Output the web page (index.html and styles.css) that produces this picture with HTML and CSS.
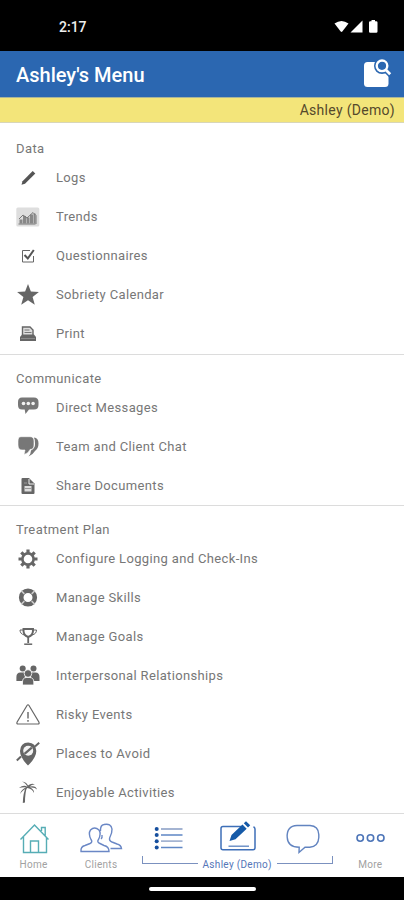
FILE: index.html
```
<!DOCTYPE html>
<html lang="en">
<head>
<meta charset="utf-8">
<title>Ashley's Menu</title>
<link rel="stylesheet" href="styles.css">
</head>
<body>
<div class="status">
  <span class="time">2:17</span>
  <svg class="status-icons" width="46" height="16" viewBox="0 0 46 16" fill="#fff"><path d="M.5 4.5Q7.500-.5 14.500 4.500L8.300 12.500Q7.500 13.300 6.700 12.500Z"/><path d="M28.500 1.500V13.500H16.500Z"/><path d="M37.500 2.200V1h3.500v1.200h1.200q1.300 0 1.300 1.300v9q0 1.300-1.300 1.300h-5.900q-1.300 0-1.300-1.300v-9q0-1.300 1.300-1.300Z"/></svg>
</div>
<header class="header">
  <h1>Ashley's Menu</h1>
  <svg class="search" width="30" height="30" viewBox="0 0 30 30"><rect x="2" y="4" width="24.500" height="25" rx="3.500" fill="#fff"/><circle cx="20" cy="8" r="8" fill="#2b67b1"/><path d="M23 11l6 6" stroke="#2b67b1" stroke-width="6"/><circle cx="20" cy="7.800" r="5.300" fill="none" stroke="#fff" stroke-width="2.400"/><path d="M23.500 11.500l4.700 4.700" stroke="#fff" stroke-width="2.800"/></svg>
</header>
<div class="client">Ashley (Demo)</div>
<main class="menu">
  <section class="data">
    <h2>Data</h2>
    <div class="row"><svg viewBox="0 0 24 24"><path d="M5.500 18.800l1-3.600L16.700 5l2.600 2.500L9 17.700Z" fill="#555"/></svg><span class="w-logs">Logs</span></div>
    <div class="row"><svg viewBox="0 0 24 24"><rect x=".3" y="2.500" width="23" height="19" rx="1.500" fill="#dedede"/><path d="M3.500 14.500h3v4h-3zM7 11h3v7.500H7zM10.500 12.500h3v6h-3zM14 9.500h3v9h-3zM17.500 8.500h2v10h-2z" fill="#888"/><path d="M2.500 19h17M3 14l4-4 4 3 6-5.500 3 3V19" fill="none" stroke="#777"/></svg><span>Trends</span></div>
    <div class="row"><svg viewBox="0 0 24 24" fill="none" stroke="#666"><path d="M14 6.500H6.500V18h11v-6"/><path d="M8.500 11l3.300 3.500L17.800 6" stroke="#555" stroke-width="2"/></svg><span>Questionnaires</span></div>
    <div class="row"><svg viewBox="0 0 24 24"><path d="M12 1l2.900 7.500 8 .4-6.300 5 2.200 7.800L12 17.200l-6.800 4.500 2.200-7.800-6.300-5 8-.4Z" fill="#666"/></svg><span>Sobriety Calendar</span></div>
    <div class="row"><svg viewBox="0 0 24 24"><path d="M6.500 13V5H14l3 3v5" fill="#ddd" stroke="#666" stroke-width="1.400"/><path d="M8.500 8h5M8.500 10.500h7" stroke="#777"/><path d="M6 12.500h12l2 2.500v4H4v-4Z" fill="#666"/><path d="M5 16.500h14" stroke="#999" stroke-width=".7"/></svg><span>Print</span></div>
  </section>
  <section>
    <h2>Communicate</h2>
    <div class="row"><svg viewBox="0 0 24 24"><path d="M6 1.500h12q4.500 0 4.500 4.500v3q0 4.500-4.500 4.500h-5L9.500 18l-.8-4.500H6Q2 13.500 2 9V6q0-4.500 4-4.500Z" fill="#777"/><g fill="#f2f2f2"><circle cx="7.500" cy="7.500" r="1.800"/><circle cx="12.300" cy="7.500" r="1.800"/><circle cx="17.100" cy="7.500" r="1.800"/></g></svg><span>Direct Messages</span></div>
    <div class="row"><svg viewBox="0 0 24 24"><path d="M18 2.500q4.500.5 4.500 6 0 5-3.500 7.500-2 3.500-6.500 5.500 2.500-3 2.500-6 4-2 4-6.500Q19 5 18 2.500Z" fill="#777"/><path d="M5 1.700h9q4 0 4 4.300v4q0 4.500-4 4.500-1.500 4-6 5l1-4.500H6q-4 0-4-5V6q0-4.300 3-4.300Z" fill="#777" stroke="#fff" stroke-width=".6"/></svg><span>Team and Client Chat</span></div>
    <div class="row"><svg viewBox="0 0 24 24"><path d="M6.500 4H13l5.500 5.500V19q0 1-1 1h-11Q5.500 20 5.500 19V5q0-1 1-1Z" fill="#666"/><path d="M13 5v5h5" fill="none" stroke="#eee"/><path d="M8.500 12h7v5.500h-7Z" fill="#ddd"/><path d="M8.500 14.500h7M8 9h3" stroke="#999"/></svg><span>Share Documents</span></div>
  </section>
  <section class="plan">
    <h2>Treatment Plan</h2>
    <div class="row"><svg viewBox="0 0 24 24"><g stroke="#666" stroke-width="3.200"><path d="M12 2.500v19M2.500 12h19M5.300 5.300l13.400 13.400M5.300 18.700L18.700 5.300"/></g><circle cx="12" cy="12" r="5.600" fill="#fff" stroke="#666" stroke-width="2.600"/></svg><span>Configure Logging and Check-Ins</span></div>
    <div class="row"><svg viewBox="0 0 24 24" fill="none"><circle cx="12" cy="11.500" r="6.800" stroke="#666" stroke-width="4.600"/><path d="M5.200 4.700l3.200 3.200M18.800 4.700l-3.200 3.200M5.200 18.300l3.200-3.200M18.800 18.300l-3.200-3.200" stroke="#ccc" stroke-width="1.500"/></svg><span>Manage Skills</span></div>
    <div class="row"><svg viewBox="0 0 24 24" fill="none" stroke="#666"><path d="M7.500 4h9.500q.5 6.500-4.800 8Q7 10.500 7.500 4Z" stroke-width="2"/><path d="M7.500 5H4q0 4 4.500 5M17 5h3.500q0 4-4.500 5"/><path d="M12.200 12v6" stroke-width="1.800"/><path d="M8.200 19.200h8" stroke-width="1.500"/></svg><span>Manage Goals</span></div>
    <div class="row"><svg viewBox="0 0 24 24" fill="#666"><circle cx="6.700" cy="4.500" r="3"/><circle cx="17.500" cy="4.500" r="3"/><path d="M.4 17V13q0-4.500 4-4.500h4.500V17ZM15 8.500h4.500q4 0 4 4.500v4H15Z"/><g stroke="#fff" stroke-width=".8"><path d="M6.500 21v-3q0-4.500 4-4.500h3q4.300 0 4.300 4.500v3Z"/><circle cx="12" cy="9.500" r="3.800"/></g></svg><span>Interpersonal Relationships</span></div>
    <div class="row"><svg viewBox="0 0 24 24" fill="none" stroke="#666"><path d="M11 2.500q1-1.500 2 0l10 16.800q.5 1.700-1 1.700H2q-1.500 0-1-1.700Z" stroke-width="1.200"/><path d="M12 9v6.500M12 17v1.800" stroke-width="1.400"/></svg><span>Risky Events</span></div>
    <div class="row"><svg viewBox="0 0 24 24"><path d="M.8 18.500L5 14.500M19 4.500l4.200-3.700" stroke="#666" stroke-width="2"/><path d="M12 23.500Q4 15.500 4 9 4.500.7 12.200.6 20 1 20.300 9q0 6.500-8.300 14.500Z" fill="#666"/><circle cx="12.200" cy="8.700" r="5" fill="#f3f3f3"/><path d="M8.500 11.800l7.300-6.100" stroke="#666" stroke-width="2.200"/></svg><span>Places to Avoid</span></div>
    <div class="row"><svg viewBox="0 0 24 24" fill="#666"><path d="M11.200 6Q9 11 9 21.500L6.800 22Q7 12 10 6Z"/><path d="M11.500 6Q8 3 3 7q4-1 8-.5Q6 7 4 13q3-4.500 7.500-6 5 1 6.500 5 .5-3.500-4-5.500 5-.5 7 2-1-4.500-7.500-3 3-2.500 5.500-2-3.500-2-7 1Q10.500 1 6 .5q4 1.500 5.500 5.500Z"/></svg><span>Enjoyable Activities</span></div>
  </section>
</main>
<nav class="nav">
  <div class="tab"><svg width="36" height="34" viewBox="0 0 36 34" fill="none" stroke="#56adb5" stroke-width="1.400"><path d="M4.500 18.500L18.500 4l14 14.500M7.500 16v15.500h23V16M25.500 10V6.500h3.700v8M14.500 31.500V20h8v11.500"/></svg></div>
  <div class="tab"><svg width="44" height="34" viewBox="0 0 44 34" fill="none" stroke="#6a87c5" stroke-width="1.400"><path d="M2 30.500q-.5-5 4-6l5-2q3-1.500 1-4-3-6-.5-9.500 4-4 8.500 0 2.500 3.500-.5 9.500-2 2.500 1.500 4l4 2q5 1 5 6Z"/><path d="M21.500 10q-.3-6 3.500-6.500 7-1.500 8 4.500.2 4-2.200 8.500-1.200 3 2.200 4.500l5 2q4 1 4.500 4.500h-11M22 18q1.500-1 1-4"/></svg></div>
  <div class="tab"><svg width="32" height="34" viewBox="0 0 32 34"><path d="M9 8h21.500M9 20.200h21.500" stroke="#a4b4d2" stroke-width="1.800"/><path d="M9 14h21.500M9 26.500h21.500" stroke="#5f87c5" stroke-width="1.500"/><g fill="#164f9e"><circle cx="4.700" cy="8" r="2"/><circle cx="4.700" cy="14" r="2"/><circle cx="4.700" cy="20.200" r="2"/><circle cx="4.700" cy="26.500" r="2"/></g></svg></div>
  <div class="tab"><svg class="edit" width="40" height="34" viewBox="0 0 40 34"><path d="M24 5.500H5q-2 0-2 2V27q0 1.700 2 1.700h30q2 0 2-1.700V8q0-1.500-1.500-2.200" fill="none" stroke="#3e6fb8" stroke-width="1.500"/><path d="M10.500 25.200h20.500" stroke="#5b83c0" stroke-width="1.300"/><path d="M11.500 20l2-6L24.500 3.500l4.200 4.200L17.500 18.200ZM25.800 2.300L28 .2l4.200 4-2.200 2.300Z" fill="#155aa8"/></svg></div>
  <div class="tab"><svg width="36" height="34" viewBox="0 0 36 34" fill="none" stroke="#6284c0" stroke-width="1.400"><path d="M12 4.500h13q8.500.5 8.800 9v3q-.5 9-9 9.800H20L14 31.500l.2-5.200q-11.500 0-12-10Q1.500 5 12 4.500Z"/></svg></div>
  <div class="tab"><svg width="36" height="34" viewBox="0 0 36 34" fill="none" stroke="#4d75b8" stroke-width="1.600"><circle cx="8.200" cy="17" r="3.200"/><circle cx="18.500" cy="17" r="3.200"/><circle cx="28.800" cy="17" r="3.200"/></svg></div>
  <span class="label">Home</span>
  <span class="label">Clients</span>
  <div class="group"><i class="left"></i><span>Ashley (Demo)</span><i class="right"></i></div>
  <span class="label more">More</span>
</nav>
<footer class="gesture"><i></i></footer>
</body>
</html>
```
FILE: styles.css
```
* { box-sizing: border-box; }
body {
  margin: 0;
  width: 404px;
  height: 900px;
  display: flex;
  flex-direction: column;
  overflow: hidden;
  background: #fff;
  font-family: Roboto, "Liberation Sans", sans-serif;
}
.status {
  height: 51px;
  flex: none;
  display: flex;
  align-items: center;
  justify-content: space-between;
  padding: 2px 24px 0 59px;
  background: #000;
  color: #eee;
}
.time { font-size: 14px; font-weight: 500; line-height: 16px; }
.header {
  height: 46px;
  flex: none;
  display: flex;
  align-items: center;
  justify-content: space-between;
  padding: 2px 12px 0 16px;
  background: #2b67b1;
  color: #fff;
}
h1 { margin: 0; font-size: 20px; font-weight: 500; line-height: 24px; }
.search { margin-bottom: 4px; }
.client {
  height: 26px;
  flex: none;
  border-top: 1px solid #a9b59a;
  border-bottom: 1px solid #d8d6b8;
  padding-right: 9px;
  background: #f3e57a;
  color: #55492b;
  font-size: 14px;
  letter-spacing: .3px;
  line-height: 25px;
  text-align: right;
}
.menu { height: 690px; flex: none; color: #777; }
section { padding-top: 14px; border-bottom: 1px solid #dcdcdc; }
.data { padding: 16px 0 1px; }
.plan { padding-bottom: 1px; }
h2 {
  margin: 0;
  padding-left: 16px;
  font-size: 13px;
  font-weight: 400;
  letter-spacing: .4px;
  line-height: 19px;
}
.row {
  height: 39px;
  display: flex;
  align-items: center;
  gap: 16px;
  padding-left: 16px;
  font-size: 13px;
  letter-spacing: .35px;
}
.row svg { width: 24px; height: 24px; flex: none; }
.nav {
  height: 64px;
  flex: none;
  display: grid;
  grid-template-columns: repeat(6, 1fr);
  grid-template-rows: 34px 18px;
  padding-top: 8px;
  color: #a1a1a1;
  font-size: 10px;
  letter-spacing: .3px;
  line-height: 18px;
  text-align: center;
}
.tab { display: flex; justify-content: center; }
.edit { margin-left: 4px; }
.group {
  grid-column: 3 / 6;
  display: flex;
  justify-content: center;
  gap: 5px;
  padding: 1px 1px 0 4px;
  color: #5576b8;
  white-space: nowrap;
}
.group span, .label { padding-top: 1px; }
.group span { margin-top: -1px; }
.group i { width: 56px; height: 8px; flex: none; border-bottom: 1px solid #7b91bf; }
.left { border-left: 1px solid #7b91bf; }
.right { border-right: 1px solid #7b91bf; }
.gesture {
  height: 23px;
  flex: none;
  display: flex;
  justify-content: center;
  align-items: center;
  background: #000;
}
.gesture i { width: 107px; height: 4px; border-radius: 2px; background: #fff; }
```
